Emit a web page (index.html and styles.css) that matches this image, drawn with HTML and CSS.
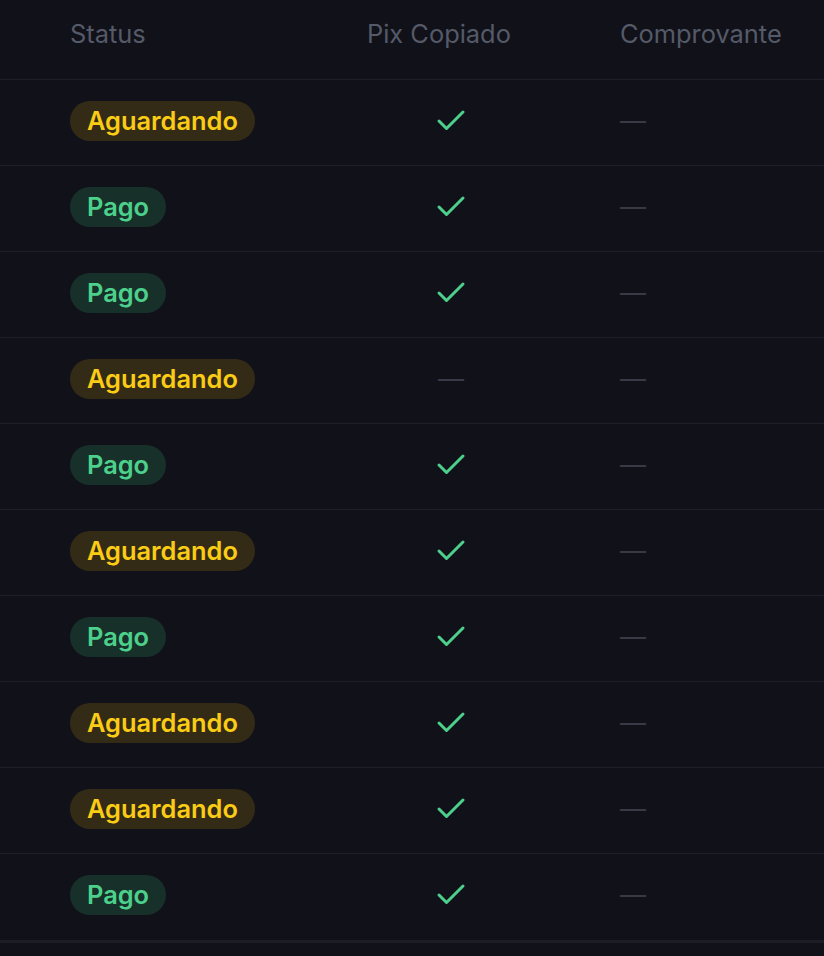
FILE: index.html
```html
<!DOCTYPE html>
<html lang="pt-BR">
<head>
    <meta charset="UTF-8">
    <meta name="viewport" content="width=device-width, initial-scale=1.0">
    <title>Pagamentos</title>
    <link rel="stylesheet" href="styles.css">
</head>
<body>

    <div class="table">
        <div class="row head">
            <div class="cell">Status</div>
            <div class="cell">Pix Copiado</div>
            <div class="cell">Comprovante</div>
        </div>

        <div class="row">
            <div class="cell"><span class="pill wait">Aguardando</span></div>
            <div class="cell"><span class="mark"><svg class="check" viewBox="0 0 24 24"><path d="M20 6 9 17l-5-5"/></svg></span></div>
            <div class="cell"><span class="dash">—</span></div>
        </div>
        <div class="row">
            <div class="cell"><span class="pill paid">Pago</span></div>
            <div class="cell"><span class="mark"><svg class="check" viewBox="0 0 24 24"><path d="M20 6 9 17l-5-5"/></svg></span></div>
            <div class="cell"><span class="dash">—</span></div>
        </div>
        <div class="row">
            <div class="cell"><span class="pill paid">Pago</span></div>
            <div class="cell"><span class="mark"><svg class="check" viewBox="0 0 24 24"><path d="M20 6 9 17l-5-5"/></svg></span></div>
            <div class="cell"><span class="dash">—</span></div>
        </div>
        <div class="row">
            <div class="cell"><span class="pill wait">Aguardando</span></div>
            <div class="cell"><span class="mark"><span class="dash">—</span></span></div>
            <div class="cell"><span class="dash">—</span></div>
        </div>
        <div class="row">
            <div class="cell"><span class="pill paid">Pago</span></div>
            <div class="cell"><span class="mark"><svg class="check" viewBox="0 0 24 24"><path d="M20 6 9 17l-5-5"/></svg></span></div>
            <div class="cell"><span class="dash">—</span></div>
        </div>
        <div class="row">
            <div class="cell"><span class="pill wait">Aguardando</span></div>
            <div class="cell"><span class="mark"><svg class="check" viewBox="0 0 24 24"><path d="M20 6 9 17l-5-5"/></svg></span></div>
            <div class="cell"><span class="dash">—</span></div>
        </div>
        <div class="row">
            <div class="cell"><span class="pill paid">Pago</span></div>
            <div class="cell"><span class="mark"><svg class="check" viewBox="0 0 24 24"><path d="M20 6 9 17l-5-5"/></svg></span></div>
            <div class="cell"><span class="dash">—</span></div>
        </div>
        <div class="row">
            <div class="cell"><span class="pill wait">Aguardando</span></div>
            <div class="cell"><span class="mark"><svg class="check" viewBox="0 0 24 24"><path d="M20 6 9 17l-5-5"/></svg></span></div>
            <div class="cell"><span class="dash">—</span></div>
        </div>
        <div class="row">
            <div class="cell"><span class="pill wait">Aguardando</span></div>
            <div class="cell"><span class="mark"><svg class="check" viewBox="0 0 24 24"><path d="M20 6 9 17l-5-5"/></svg></span></div>
            <div class="cell"><span class="dash">—</span></div>
        </div>
        <div class="row last">
            <div class="cell"><span class="pill paid">Pago</span></div>
            <div class="cell"><span class="mark"><svg class="check" viewBox="0 0 24 24"><path d="M20 6 9 17l-5-5"/></svg></span></div>
            <div class="cell"><span class="dash">—</span></div>
        </div>
    </div>

</body>
</html>
```

FILE: styles.css
```css
* {
    margin: 0;
    padding: 0;
    box-sizing: border-box;
}

body {
    font-family: Inter, "Noto Sans", sans-serif;
    background-color: #111119;
    min-height: 100vh;
}

.table {
    display: flex;
    flex-direction: column;
}

.row {
    display: grid;
    grid-template-columns: 297px 253px 1fr;
    padding-left: 70px;
    padding-bottom: 3px;
    height: 86px;
    border-bottom: 1px solid #1f1f29;
}

.cell {
    display: flex;
    align-items: center;
}

/* Header */
.row.head {
    height: 80px;
    padding-bottom: 0;
    align-items: start;
}

.row.head .cell {
    padding-top: 19px;
    line-height: 30px;
    font-size: 25.4px;
    color: #555a68;
}

.row.last {
    border-bottom: 3px solid #1d1d27;
    height: 89px;
    padding-bottom: 5px;
}

/* Status pills */
.pill {
    display: inline-block;
    height: 40px;
    line-height: 40px;
    padding: 0 17px;
    border-radius: 20px;
    font-size: 25.4px;
    font-weight: 600;
}

.pill.wait {
    background-color: #342b16;
    color: #facc15;
}

.pill.paid {
    background-color: #17302a;
    color: #4cd08b;
}

.mark {
    width: 168px;
    display: flex;
    justify-content: center;
}

.check {
    width: 36px;
    height: 36px;
    fill: none;
    stroke: #4cd08b;
    stroke-width: 2;
    stroke-linecap: round;
    stroke-linejoin: round;
}

.dash {
    font-size: 26px;
    color: #3a3a46;
    line-height: 36px;
}
```
